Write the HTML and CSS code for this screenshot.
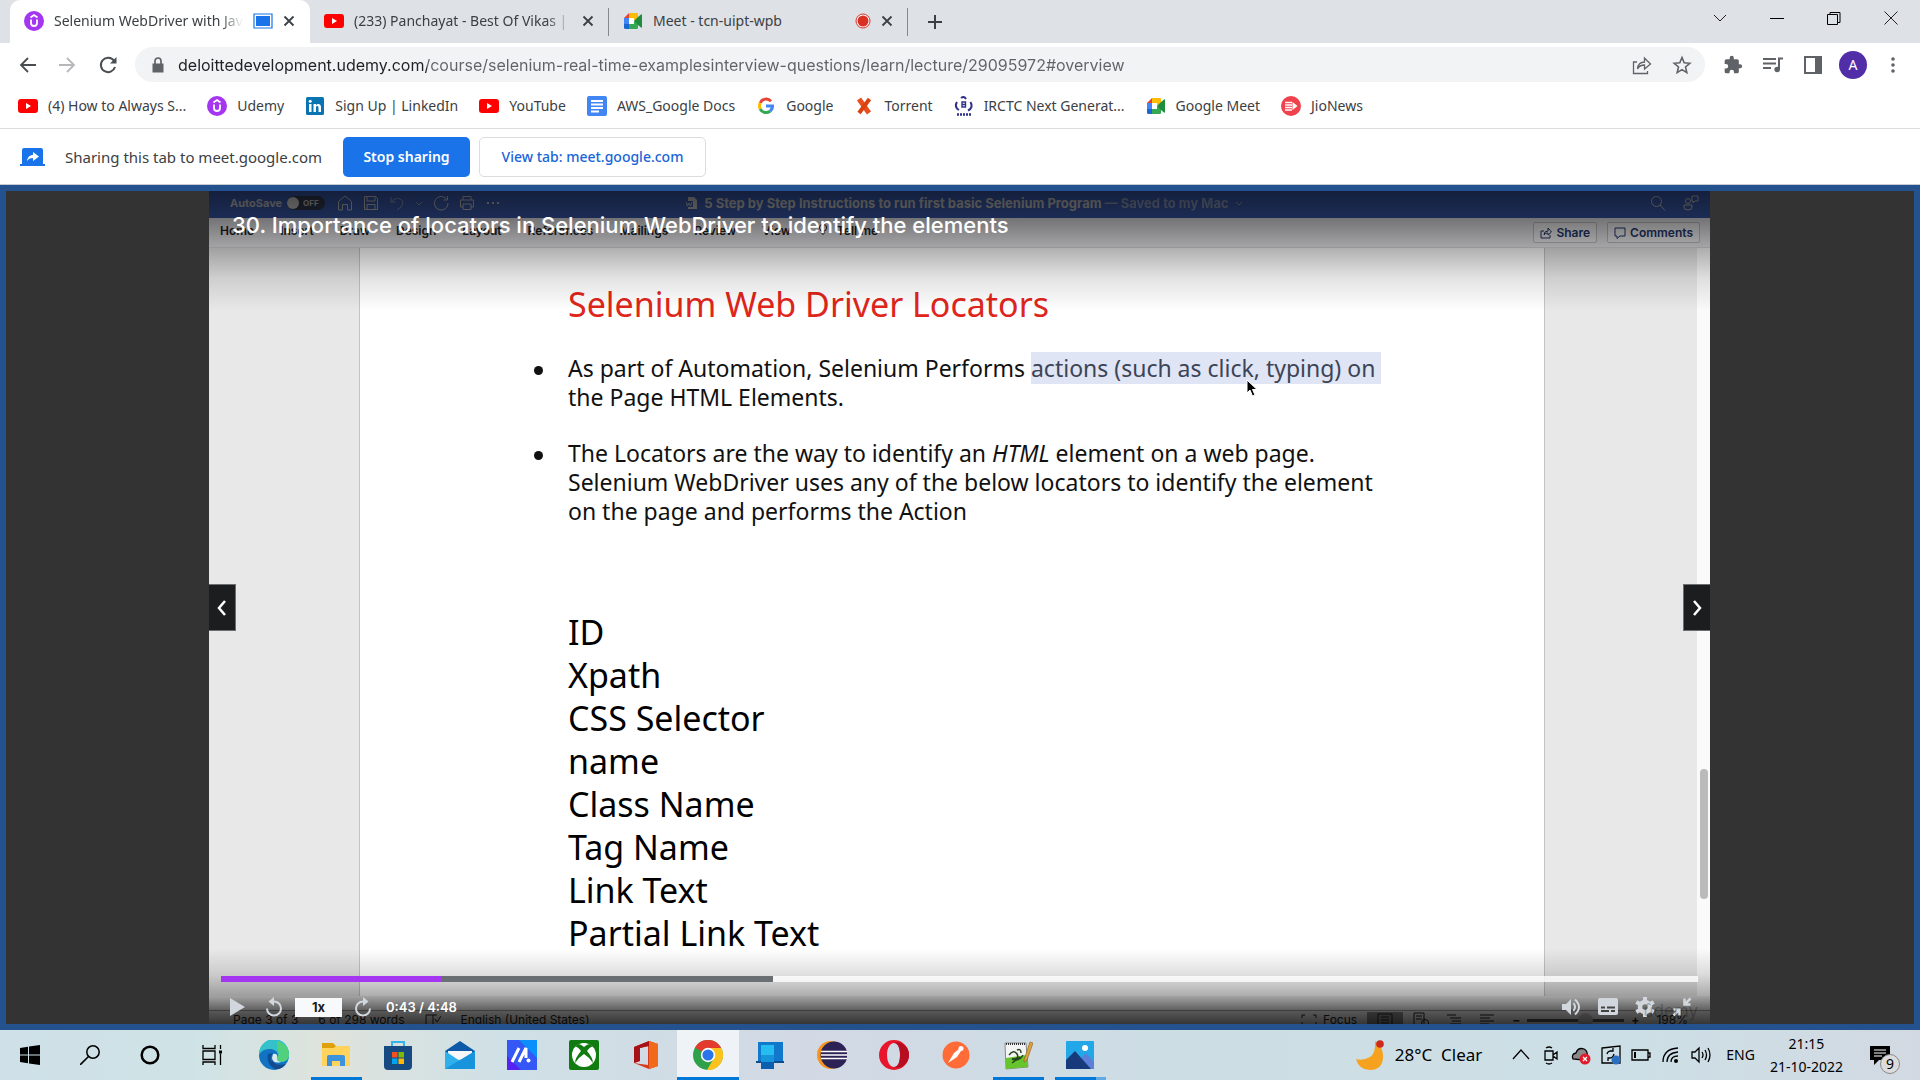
FILE: index.html
```html
<!DOCTYPE html>
<html lang="en">
<head>
<meta charset="utf-8">
<title>Selenium WebDriver with Java</title>
<link rel="stylesheet" href="styles.css">
</head>
<body>
<svg class="defs" width="0" height="0" aria-hidden="true">
  <symbol id="youtube" viewBox="0 0 20 20"><rect y="3" width="20" height="14" rx="3" fill="#f00"/><path d="M8 7v6l5-3z" fill="#fff"/></symbol>
  <symbol id="udemy" viewBox="0 0 20 20"><circle cx="10" cy="10" r="10" fill="#a435f0"/><path d="M6.500 6.500 10 4l3.500 2.500M7 8.500V12a3 3 0 0 0 6 0V8.500" fill="none" stroke="#fff" stroke-width="1.800"/></symbol>
  <symbol id="meet" viewBox="0 0 20 20"><path d="M1 7 6 2v5z" fill="#ea4335"/><path d="M6 2h8a1 1 0 0 1 1 1v4l-4 3V7H6z" fill="#fbbc04"/><path d="M1 7h5v6H1z" fill="#4285f4"/><path d="M1 13h5v5H2.500A1.500 1.500 0 0 1 1 16.500z" fill="#1967d2"/><path d="M6 13h5v-3l4 3v4a1 1 0 0 1-1 1H6z" fill="#34a853"/><path d="M6 7h5v6H6z" fill="#fff"/><path d="m11 10 4-4 3-2.500q1-.5 1 .5v12q0 1-1 .5L15 14z" fill="#1e8e3e"/></symbol>
  <symbol id="x" viewBox="0 0 12 12"><path d="m1.500 1.500 9 9m0-9-9 9" stroke="#3c4043" stroke-width="1.800" fill="none"/></symbol>
</svg>

<header class="browser">
  <div class="tabstrip">
    <div class="tab tab-active">
      <svg class="i20"><use href="#udemy"/></svg>
      <span class="tab-title">Selenium WebDriver with Java</span>
      <svg class="i20" viewBox="0 0 20 20"><path d="M1 3h18v14H1z" fill="#fff" stroke="#1a73e8" stroke-width="1.200"/><path d="M3 5h14v10H3z" fill="#1a73e8"/></svg>
      <button class="bare tab-close" aria-label="Close tab"><svg class="i12"><use href="#x"/></svg></button>
    </div>
    <div class="tab">
      <svg class="i20"><use href="#youtube"/></svg>
      <span class="tab-title">(233) Panchayat - Best Of Vikas | TVF</span>
      <button class="bare tab-close" aria-label="Close tab"><svg class="i12"><use href="#x"/></svg></button>
    </div>
    <div class="tab tab-line">
      <svg class="i20"><use href="#meet"/></svg>
      <span class="tab-title">Meet - tcn-uipt-wpb</span>
      <svg class="i16" viewBox="0 0 16 16"><circle cx="8" cy="8" r="7" fill="#fff" stroke="#d93025"/><circle cx="8" cy="8" r="5.500" fill="#d93025"/></svg>
      <button class="bare tab-close" aria-label="Close tab"><svg class="i12"><use href="#x"/></svg></button>
    </div>
    <button class="bare tab-new" aria-label="New tab"><svg class="i16" viewBox="0 0 16 16"><path d="M8 1v14M1 8h14" stroke="#3c4043" stroke-width="2"/></svg></button>
    <div class="window-buttons">
      <button class="bare" aria-label="Search tabs"><svg class="i16" viewBox="0 0 16 16"><path d="m2 5 6 6 6-6" fill="none" stroke="#222"/></svg></button>
      <button class="bare" aria-label="Minimize"><svg class="i16" viewBox="0 0 16 16"><path d="M1 8.500h14" stroke="#000"/></svg></button>
      <button class="bare" aria-label="Restore"><svg class="i16" viewBox="0 0 16 16"><path d="M1.500 4.500h10v10h-10zM4 4V2.500h10v10h-2" fill="none" stroke="#000"/></svg></button>
      <button class="bare" aria-label="Close"><svg class="i16" viewBox="0 0 16 16"><path d="m1.500 1.500 13 13m0-13-13 13" stroke="#222" fill="none"/></svg></button>
    </div>
  </div>

  <div class="toolbar">
    <div class="nav">
      <button class="bare" aria-label="Back"><svg class="i20" viewBox="0 0 20 20"><path d="M18 10H3m7-7-7 7 7 7" fill="none" stroke="#4a4d51" stroke-width="1.800"/></svg></button>
      <button class="bare" aria-label="Forward"><svg class="i20" viewBox="0 0 20 20"><path d="M1 10h15M9 3l7 7-7 7" fill="none" stroke="#b5b7ba" stroke-width="1.800"/></svg></button>
      <button class="bare" aria-label="Reload"><svg class="i20" viewBox="0 0 20 20"><path d="M16 5.800A7.200 7.200 0 1 0 17 12" fill="none" stroke="#4a4d51" stroke-width="2"/><path d="M18.500 2v6.500H12z" fill="#4a4d51"/></svg></button>
    </div>
    <div class="omnibox">
      <svg class="i16" viewBox="0 0 16 16"><path d="M2.500 6.500h11v9h-11z" fill="#5f6368"/><path d="M5 7V4a3 3 0 0 1 6 0v3" fill="none" stroke="#5f6368" stroke-width="1.700"/></svg>
      <input class="url" type="text" aria-label="Address" value="deloittedevelopment.udemy.com/course/selenium-real-time-examplesinterview-questions/learn/lecture/29095972#overview">
      <button class="bare" aria-label="Share this page"><svg class="i20" viewBox="0 0 20 20"><path d="M5 7H1.500v11.500h14V16M5.500 14c.5-5 3-7 7-7V3l6 6-6 5v-4c-3.500 0-5.500 1-7 4z" fill="none" stroke="#5f6368" stroke-width="1.300"/></svg></button>
      <button class="bare" aria-label="Bookmark this tab"><svg class="i20" viewBox="0 0 20 20"><path d="m10 2.500 2.200 5.300 5.600.5-4.300 3.700 1.300 5.600L10 14.600l-4.800 3 1.300-5.600-4.300-3.700 5.600-.5z" fill="none" stroke="#5f6368" stroke-width="1.600"/></svg></button>
    </div>
    <div class="actions">
      <button class="bare" aria-label="Extensions"><svg class="i20" viewBox="0 0 24 24"><path d="M20.500 11H19V7a2 2 0 0 0-2-2h-4V3.500a2.500 2.500 0 0 0-5 0V5H4a2 2 0 0 0-2 2v3.800h1.500a2.700 2.700 0 0 1 0 5.400H2V20a2 2 0 0 0 2 2h3.800v-1.500a2.700 2.700 0 0 1 5.400 0V22H17a2 2 0 0 0 2-2v-4h1.500a2.500 2.500 0 0 0 0-5z" fill="#5f6368"/></svg></button>
      <button class="bare" aria-label="Media"><svg class="i20" viewBox="0 0 20 20"><path d="M0 4h13M0 8.500h13M0 13h8M20 3.500h-4V14" fill="none" stroke="#5f6368" stroke-width="2"/><circle cx="14.200" cy="14.500" r="2.800" fill="#5f6368"/></svg></button>
      <button class="bare" aria-label="Side panel"><svg class="i20" viewBox="0 0 20 20"><path d="M2 2h16v16H2z" fill="none" stroke="#5f6368" stroke-width="2"/><path d="M12 2h6v16h-6z" fill="#5f6368"/></svg></button>
      <button class="bare avatar" aria-label="Profile">A</button>
      <button class="bare" aria-label="Menu"><svg class="i20" viewBox="0 0 20 20" fill="#5f6368"><circle cx="10" cy="4" r="1.800"/><circle cx="10" cy="10" r="1.800"/><circle cx="10" cy="16" r="1.800"/></svg></button>
    </div>
  </div>

  <nav class="bookmarks">
    <a href="#"><svg class="i20"><use href="#youtube"/></svg>(4) How to Always S...</a>
    <a href="#"><svg class="i20"><use href="#udemy"/></svg>Udemy</a>
    <a href="#"><svg class="i20" viewBox="0 0 20 20"><rect x="1" y="1" width="18" height="18" rx="1.500" fill="#0a74b3"/><path d="M4 8h2.500v8H4zM8.500 8H11v1.200C12.500 7 16 7.500 16 11v5h-2.500v-4.500c0-2-2.500-2-2.500 0V16H8.500z" fill="#fff"/><circle cx="5.200" cy="5.300" r="1.500" fill="#fff"/></svg>Sign Up | LinkedIn</a>
    <a href="#"><svg class="i20"><use href="#youtube"/></svg>YouTube</a>
    <a href="#"><svg class="i20" viewBox="0 0 20 20"><rect width="20" height="20" rx="2" fill="#4285f4"/><path d="M4 5h12M4 8.500h12M4 12h12M4 15.500h8" stroke="#fff" stroke-width="2"/></svg>AWS_Google Docs</a>
    <a href="#"><svg class="i20" viewBox="0 0 20 20" fill="none" stroke-width="3"><path d="M15 5.200A6.500 6.500 0 0 0 4.200 7" stroke="#ea4335"/><path d="M4.200 7a6.500 6.500 0 0 0 0 6" stroke="#fbbc05"/><path d="M4.200 13A6.500 6.500 0 0 0 14 15.200" stroke="#34a853"/><path d="M14 15.200A6.500 6.500 0 0 0 16.500 10H10" stroke="#4285f4"/></svg>Google</a>
    <a href="#"><svg class="i20" viewBox="0 0 20 20"><path d="m5 3 10 14" stroke="#e8501f" stroke-width="5"/><path d="M15.500 3 5 17" stroke="#d8430f" stroke-width="4"/></svg>Torrent</a>
    <a href="#"><svg class="i20" viewBox="0 0 20 20" fill="none" stroke="#2f3288"><path d="M7 2q3-2.500 5 1M3 6q-3 5 2 8M16.500 6q3 6-2.500 8.500" stroke-width="2"/><path d="M8 6h3.500v5H8zM8 8.500h3.500" stroke-width="1.400"/><path d="M3 18.500h14" stroke-width="2.500" stroke-dasharray="2 1"/></svg>IRCTC Next Generat...</a>
    <a href="#"><svg class="i20"><use href="#meet"/></svg>Google Meet</a>
    <a href="#"><svg class="i20" viewBox="0 0 20 20"><circle cx="10" cy="10" r="10" fill="#f0424c"/><path d="M4 6.500h7M4 9h7M4 11.500h7M4 14h7" stroke="#fff" stroke-width="1.400"/><path d="M11.500 6v8l5-4z" fill="#fff"/></svg>JioNews</a>
  </nav>

  <div class="sharebar">
    <svg class="share-icon" viewBox="0 0 25 18"><path d="M2 2a2 2 0 0 1 2-2h17a2 2 0 0 1 2 2v14h2v2H0v-2h2z" fill="#1a73e8"/><path d="M7 13c.5-4 3-6 6-6V4l6 4.500-6 4.500v-3c-3 0-4.500 1-6 3z" fill="#fff"/></svg>
    <span>Sharing this tab to meet.google.com</span>
    <div class="share-buttons">
      <button class="stop">Stop sharing</button>
      <button class="view">View tab: meet.google.com</button>
    </div>
  </div>
</header>

<main class="stage">
  <section class="player">
    <div class="word">
      <div class="word-title">
        <div class="word-tools">
          <b>AutoSave</b>
          <span class="toggle"><i></i>OFF</span>
          <svg class="i16" viewBox="0 0 16 16"><path d="M1.500 6.500 8 1l6.500 5.500V15h-4V9.500h-5V15h-4z"/></svg>
          <svg class="i16" viewBox="0 0 16 16"><path d="M1.500 1.500h11l2 2v11h-13zM4 1.500V6h8V1.500M4 14.500V9.500h8v5"/></svg>
          <svg class="i16 dim" viewBox="0 0 16 16"><path d="M2 2v5h5M2 7q4-5 9-3t1 8l-4 3"/></svg>
          <svg class="i8 dim" viewBox="0 0 8 8"><path d="m1 3 3 3 3-3"/></svg>
          <svg class="i16" viewBox="0 0 16 16"><path d="M13.500 4A6.800 6.800 0 1 0 15 8M14.500 1v4h-4"/></svg>
          <svg class="i16" viewBox="0 0 16 16"><path d="M4 5V1.500h8V5M4 12H1.500V5h13v7H12M4 9h8v5.500H4z"/></svg>
          <svg class="i16" viewBox="0 0 16 16"><path class="solid" d="M2 7h2v2H2zm5 0h2v2H7zm5 0h2v2h-2z"/></svg>
        </div>
        <div class="word-name"><svg class="i12" viewBox="0 0 12 12"><path class="solid" d="M2 0h6l3 3v9H2v-2h5V4H2z"/><path d="m0 5 1.500 4L3 6l1.500 3L6 5"/></svg><b>5 Step by Step Instructions to run first basic Selenium Program <span class="dim">— Saved to my Mac</span></b><svg class="i8 dim" viewBox="0 0 8 8"><path d="m1 3 3 3 3-3"/></svg></div>
        <div class="word-right">
          <svg class="i16" viewBox="0 0 16 16"><circle cx="6.500" cy="6.500" r="5"/><path d="m10 10 5 5.500"/></svg>
          <svg class="i16" viewBox="0 0 16 16"><circle cx="5" cy="6" r="2.500"/><path d="M1 10h8v2q0 3-4 3t-4-3zM9 1h6v5h-3l-2 2V6H9z"/></svg>
        </div>
      </div>
      <div class="ribbon">
        <div class="ribbon-tabs"><span>Home</span><span>Insert</span><span>Draw</span><span>Design</span><span>Layout</span><span>References</span><span>Mailings</span><span>Review</span><span>View</span><span class="tell"><svg class="i12" viewBox="0 0 12 12"><path d="M4 8Q1 5 3 2.500q3-3 6 0Q11 5 8 8zM4 10h4M5 12h2"/></svg>Tell me</span></div>
        <div class="ribbon-buttons">
          <button><svg class="i12" viewBox="0 0 12 12"><path d="M4 4H1v7h9V8M4 8q0-4 4-4V1l3.500 4L8 8V6Q5 6 4 8z"/></svg>Share</button>
          <button><svg class="i12" viewBox="0 0 12 12"><path d="M1 1h10v8H6l-3 2.500V9H1z"/></svg>Comments</button>
        </div>
      </div>
      <div class="workspace">
        <article class="page">
          <h1>Selenium Web Driver Locators</h1>
          <ul class="points">
            <li>As part of Automation, Selenium Performs <mark>actions (such as click, typing) on&nbsp;</mark><wbr>the Page HTML Elements.</li>
            <li>The Locators are the way to identify an <em>HTML</em> element on a web page. Selenium WebDriver uses any of the below locators to identify the element on the page and performs the Action</li>
          </ul>
          <ul class="locators">
            <li>ID</li><li>Xpath</li><li>CSS Selector</li><li>name</li><li>Class Name</li><li>Tag Name</li><li>Link Text</li><li>Partial Link Text</li>
          </ul>
          <svg class="pointer" viewBox="0 0 12 18"><path d="M1 1v13l3-3 2.500 6 2.500-1-2.500-5.500H11z" fill="#000" stroke="#fff"/></svg>
        </article>
        <div class="scroll-track"><div class="scroll-thumb"></div></div>
      </div>
      <div class="under-page"></div>
      <div class="status">
        <div class="status-left"><span>Page 3 of 3</span><span>6 of 298 words</span><svg class="i16" viewBox="0 0 16 16"><path d="M8 3v11M8 3H1v10h6l1 1 1-1h5M8 3h4m-2 4 2 3 4-6"/></svg><span>English (United States)</span></div>
        <div class="status-right">
          <span class="focus"><svg class="i16" viewBox="0 0 16 16"><path d="M4 3H1v3m11-3h3v3M1 10v3h3m11-3v3h-3"/></svg>Focus</span>
          <span class="layout-on"><svg class="i16" viewBox="0 0 16 16"><path d="M1 2h14v12H1zM4 5h8M4 8h8M4 11h8"/></svg></span>
          <svg class="i16" viewBox="0 0 16 16"><path d="M1 1h10v12H1zM3 4h6M3 7h6"/><circle cx="12" cy="11" r="3.500"/></svg>
          <svg class="i16" viewBox="0 0 16 16"><path d="M1 3h9M4 6h11M6 9h9M4 12h11"/></svg>
          <svg class="i16" viewBox="0 0 16 16"><path d="M1 3h14M1 6h10M1 9h14M1 12h9"/></svg>
          <span class="zoom-slider"><b>−</b><i class="rail"><i class="knob"></i></i><b>+</b></span>
          <span>198%</span>
        </div>
      </div>
    </div>

    <div class="overlay">
      <h2>30. Importance of locators in Selenium WebDriver to identify the elements</h2>
      <div class="side-buttons">
        <button class="prev" aria-label="Previous lecture"><svg class="i16" viewBox="0 0 16 16"><path d="m11 1-6 7 6 7"/></svg></button>
        <button class="next" aria-label="Next lecture"><svg class="i16" viewBox="0 0 16 16"><path d="m5 1 6 7-6 7"/></svg></button>
      </div>
      <div class="controls">
        <input class="seek" type="range" min="0" max="288" value="43" aria-label="Seek">
        <div class="control-row">
          <button class="bare" aria-label="Play"><svg class="i20" viewBox="0 0 20 20"><path d="M3 1v18l15-9z" fill="#d1d7dc"/></svg></button>
          <button class="bare" aria-label="Back 5 seconds"><svg class="i20" viewBox="0 0 20 20"><path d="M10 4.500a7 7 0 1 1-7 7" fill="none" stroke="#d1d7dc" stroke-width="2"/><path d="M10 0v9L4.500 4.500z" fill="#d1d7dc"/></svg></button>
          <button class="rate">1x</button>
          <button class="bare" aria-label="Forward 5 seconds"><svg class="i20" viewBox="0 0 20 20"><path d="M10 4.500a7 7 0 1 0 7 7" fill="none" stroke="#d1d7dc" stroke-width="2"/><path d="M10 0v9l5.500-4.500z" fill="#d1d7dc"/></svg></button>
          <span class="time">0:43 / 4:48</span>
          <div class="control-right">
            <span class="brand">ûdemy</span>
            <button class="bare" aria-label="Volume"><svg class="i20" viewBox="0 0 20 20"><path d="M1 7h4l5-5v16l-5-5H1z" fill="#d1d7dc"/><path d="M12.500 6q3 4 0 8M14 2.500q8 7.500 0 15" fill="none" stroke="#d1d7dc" stroke-width="2"/></svg></button>
            <button class="bare" aria-label="Captions"><svg class="i20" viewBox="0 0 20 20"><rect y="1" width="20" height="17" rx="2" fill="#d1d7dc"/><path d="M3 10.500h4m2 0h8M3 14h8m2 0h4" stroke="#444" stroke-width="2"/></svg></button>
            <button class="bare" aria-label="Settings"><svg class="i20" viewBox="0 0 20 20"><circle cx="10" cy="10" r="5" fill="none" stroke="#d1d7dc" stroke-width="4.500"/><path d="M10 0v4m0 12v4M1.300 5l3.500 2m10.400 6 3.500 2m0-10-3.500 2M4.800 13l-3.500 2" stroke="#d1d7dc" stroke-width="4"/></svg></button>
            <button class="bare" aria-label="Exit full screen"><svg class="i20" viewBox="0 0 20 20"><path d="m18.500 1.500-6 6m0-6v6h6m-17 11 6-6m0 6v-6h-6" fill="none" stroke="#d1d7dc" stroke-width="2.500"/></svg></button>
          </div>
        </div>
      </div>
    </div>
  </section>
</main>

<footer class="taskbar">
  <div class="apps">
    <button class="app sys" aria-label="Start"><svg class="i20" viewBox="0 0 20 20"><path d="m0 3 8-1.200v7.700H0zM9 1.600 20 0v9.500H9zM0 10.500h8v7.700L0 17zM9 10.500h11V20L9 18.400z"/></svg></button>
    <button class="app sys" aria-label="Search"><svg class="i20" viewBox="0 0 20 20"><circle cx="13" cy="7" r="6.200" fill="none" stroke="#000" stroke-width="1.500"/><path d="M8.500 11.500 0 20" stroke="#000" stroke-width="1.600"/></svg></button>
    <button class="app sys" aria-label="Cortana"><svg class="i20" viewBox="0 0 20 20"><circle cx="10" cy="10" r="8.300" fill="none" stroke="#000" stroke-width="2.500"/></svg></button>
    <button class="app sys" aria-label="Task view"><svg class="i20" viewBox="0 0 20 20"><path d="M1 0v3.500h12V0M1 6h12v8.500H1zM1 20v-3h12v3M18.500 0v4M18.500 8.500V20" fill="none" stroke="#000" stroke-width="1.300"/><path d="M17 5.500h3v3h-3z"/></svg></button>
    <button class="app" aria-label="Edge"><svg class="i30" viewBox="0 0 30 30"><circle cx="15" cy="15" r="15" fill="#1273c4"/><path d="M0 13A15 15 0 0 1 30 15c0 5-4 7-8 7s-5-2-4-4c3-5-2-9-7-9C6 9 2 11 0 15z" fill="#35c1c9"/><path d="M18 1q12 3 12 14c0 4-4 7-8 7s-5-2-4-4q3-4 1-7z" fill="#52d17c"/><path d="M9 14c-2 8 3 15 10 15l5-2q-10 2-12-6-1-4 2-8z" fill="#0c4f94"/><path d="M13 19q2 8 14 5-5 6-11 5-6-4-3-10z" fill="#154b8e"/><path d="M14 14q5-1 4 4-1 3 4 4-8 2-9-4z" fill="#dce9ee"/></svg></button>
    <button class="app open" aria-label="File Explorer"><svg class="i30" viewBox="0 0 30 30"><path d="M1 3h11l3 3h13v4H1z" fill="#e0a00b"/><path d="M1 8h12l2-2h14v20H1z" fill="#ffd35c"/><path d="M6 26V17q0-2 2-2h14q2 0 2 2v9h-5v-5h-8v5z" fill="#3a93dc"/></svg></button>
    <button class="app" aria-label="Store"><svg class="i30" viewBox="0 0 30 30"><path d="M9 7V2h12v5" fill="none" stroke="#35b4ec" stroke-width="2"/><path d="M1 6h28v20q0 4-4 4H5q-4 0-4-4z" fill="#164a80"/><path d="M9 12h5.500v5.500H9z" fill="#f25022"/><path d="M15.500 12H21v5.500h-5.500z" fill="#7fba00"/><path d="M9 18.500h5.500V24H9z" fill="#00a4ef"/><path d="M15.500 18.500H21V24h-5.500z" fill="#ffb900"/></svg></button>
    <button class="app" aria-label="Mail"><svg class="i30" viewBox="0 0 30 30"><path d="M0 11 15 1l15 10v5H0z" fill="#0d59a8"/><path d="M3 11h24v8H3z" fill="#f5f7fa"/><path d="m0 11 15 10 15-10v18H0z" fill="#2eb0ec"/><path d="M0 29 30 11v18z" fill="#1893dc"/></svg></button>
    <button class="app" aria-label="MyASUS"><svg class="i30" viewBox="0 0 30 30"><path d="M0 0h30v30H0z" fill="#3457f5"/><path d="M0 30V16l14 14z" fill="#5722f0"/><path d="M12 0h18v18z" fill="#0b8ff8"/><path d="m5 22 7-14M12 22l7-14v10" stroke="#fff" stroke-width="3" fill="none"/><circle cx="21.500" cy="20.500" r="2" fill="#fff"/></svg></button>
    <button class="app" aria-label="Xbox"><svg class="i30" viewBox="0 0 30 30"><rect width="30" height="30" rx="2" fill="#107c10"/><circle cx="15" cy="15" r="12" fill="#fff"/><path d="M9 4q3 0 6 3 3-3 6-3l3 3q-2-1-6 4 6 7 6 12-4-6-9-9-5 3-9 9 0-5 6-12-4-5-6-4z" fill="#107c10"/></svg></button>
    <button class="app" aria-label="Office"><svg class="i30" viewBox="0 0 30 30"><path d="M3 7 18 1l9 3v22l-9 3-15-6 14 2V6L9 8v13l-6 2z" fill="#d73b1a"/><path d="m18 1 9 3v22l-9 3z" fill="#f06a19"/><path d="M3 7 18 1v5L9 8v13l-6 2z" fill="#a61218"/></svg></button>
    <button class="app open current" aria-label="Chrome"><svg class="i30" viewBox="0 0 30 30"><circle cx="15" cy="15" r="15" fill="#2ea14a"/><path d="M15 15 2 7.500A15 15 0 0 1 28 7.500z" fill="#e33b2e"/><path d="M15 8h13.300A15 15 0 0 1 14 30l7-12z" fill="#fcc31e"/><circle cx="15" cy="15" r="7.200" fill="#fff"/><circle cx="15" cy="15" r="5.600" fill="#2b74ec"/></svg></button>
    <button class="app" aria-label="Your Phone"><svg class="i30" viewBox="0 0 30 30"><path d="M3 2h25v19H3z" fill="#1278cc"/><path d="M1 21h28v2H1z" fill="#0b4f91"/><path d="M6 5h13v24H6z" fill="#27bdf0"/><path d="M6 15h13v7H6z" fill="#1795dc"/><path d="M6 22h13v7H6z" fill="#0c5fae"/></svg></button>
    <button class="app" aria-label="Eclipse"><svg class="i30" viewBox="0 0 30 30"><circle cx="14" cy="15" r="14" fill="#f7941e"/><circle cx="17" cy="15" r="13.500" fill="#2c2255"/><path d="M4 11.500h26M4 15h26M4 18.500h26" stroke="#fff" stroke-width="1.600"/></svg></button>
    <button class="app" aria-label="Opera"><svg class="i30" viewBox="0 0 30 30"><path d="M15 0a15 15 0 1 0 0 30 15 15 0 1 0 0-30m0 3c4 0 6 5 6 12s-2 12-6 12-7-5-7-12S11 3 15 3" fill="#e8162d" fill-rule="evenodd"/><path d="M15 3c4 0 6 5 6 12s-2 12-6 12q5 2 9-1 6-4 6-11T24 4q-4-3-9-1" fill="#b80d20"/></svg></button>
    <button class="app" aria-label="Postman"><svg class="i30" viewBox="0 0 30 30"><circle cx="15" cy="15" r="13.500" fill="#ff6c37"/><path d="m7 23 6-10 5-4 2 2-4 6z" fill="#fff"/><circle cx="20" cy="8.500" r="2.500" fill="#fff"/></svg></button>
    <button class="app open" aria-label="Notepad++"><svg class="i30" viewBox="0 0 30 30"><path d="M2 3h21l2 24-22 2z" fill="#f4f4f4" stroke="#888"/><path d="m3 18 21-3 1 12-22 2z" fill="#66c52d"/><path d="M3 4h20" stroke="#333" stroke-width="2" stroke-dasharray="1 1"/><path d="M6 15q5-6 8-1t-5 5q7 3 11-4M9 23l8-6M14 10q4-2 4 3" fill="none" stroke="#26451c" stroke-width="1.500"/><path d="m21 20 6-18 3 1-6 17-3 2z" fill="#e0a33c" stroke="#8a5a1e" stroke-width=".6"/></svg></button>
    <button class="app open photos" aria-label="Photos"><svg class="i30" viewBox="0 0 30 30"><rect x="1" y="1" width="28" height="28" rx="1" fill="#22a7e8"/><path d="m15 20 6-7 8 9v7H15z" fill="#5d7fd8"/><path d="m1 20 9-9 16 18H1z" fill="#173a7a"/><circle cx="20" cy="8" r="3" fill="#fff"/></svg></button>
  </div>
  <div class="tray">
    <span class="weather"><svg class="i30" viewBox="0 0 30 30"><path d="M20 1q1 12-5 16-7 4-14 2 3 11 14 11 12 0 13-12 1-10-8-17z" fill="#f6a21f"/><circle cx="25" cy="4" r="3.800" fill="#cc2a1c"/></svg>28°C&nbsp; Clear</span>
    <span class="tray-icons">
      <svg class="i20" viewBox="0 0 20 20"><path d="m2 14 8-9 8 9"/></svg>
      <svg class="i20" viewBox="0 0 20 20"><path d="M4 6h8v9H4zM12 10l4-3v7l-4-3M5 3q3-2 6 0M5 18q3 2 6 0"/></svg>
      <svg class="i20" viewBox="0 0 20 20"><path d="M2 14q-2-5 3-6 2-6 8-4 4 2 3 7l-4 4z" fill="#8a8a8a"/><circle cx="14" cy="14" r="5.500" fill="#e01b2b" stroke="none"/><path d="m12 12 4 4m0-4-4 4" stroke="#fff"/></svg>
      <svg class="i20" viewBox="0 0 20 20"><path d="m1 3 18-2v17H1zM6 9q1-4 6-3m-5 7q5 1 6-4M12 3v3H9M7 16v-3h3"/><circle cx="15" cy="15" r="4.500" fill="#2a6fc0" stroke="none"/></svg>
      <svg class="i20" viewBox="0 0 20 20"><path d="M1 5h16v10H1zM17 8h2v4h-2"/><path d="M3 7h2v6H3z" fill="#000" stroke="none"/></svg>
      <svg class="i20" viewBox="0 0 20 20"><path d="M2 17Q2 4 17 3M6 17q0-9 11-10M10 17q0-6 7-6"/><circle cx="15" cy="16" r="2" fill="#000" stroke="none"/></svg>
      <svg class="i20" viewBox="0 0 20 20"><path d="M1 7h3l4-4v14l-4-4H1zM11 7q2 3 0 6M14 5q3 5 0 10M17 3q4 7 0 14"/></svg>
    </span>
    <span>ENG</span>
    <span class="clock"><time>21:15</time><time>21-10-2022</time></span>
    <span class="notice"><svg class="i20" viewBox="0 0 20 20"><path d="M0 1h20v14H9l-5 5v-5H0z"/><path d="M4 5h12M4 8h12M4 11h8" stroke="#fff"/></svg><span class="badge">9</span></span>
  </div>
</footer>
</body>
</html>
```
FILE: styles.css
```css
* { box-sizing: border-box; }
body { margin: 0; min-height: 100vh; display: flex; flex-direction: column; background: #fff; color: #3c4043; font: 14px/20px "Noto Sans", "Open Sans", sans-serif; }
button, input { font: inherit; }
h1, h2, ul { margin: 0; padding: 0; font-weight: 400; }
ul { list-style: none; }
svg { flex: none; display: block; }
.defs { position: absolute; }
.i8 { width: 8px; height: 8px; }
.i12 { width: 12px; height: 12px; }
.i16 { width: 16px; height: 16px; }
.i20 { width: 20px; height: 20px; }
.i30 { width: 30px; height: 30px; }
.bare { padding: 0; border: 0; background: none; }

/* Tabs */
.tabstrip { display: flex; height: 43px; padding-left: 10px; background: #dee1e6; }
.tab { display: flex; align-items: center; width: 299px; padding: 0 14px 2px; gap: 10px; border-right: 1px solid transparent; }
.tab-active { width: 300px; background: #fff; border-radius: 10px 10px 0 0; }
.tab:not(.tab-active) { border-image: linear-gradient(transparent 20%, #85888d 20%, #85888d 82%, transparent 82%) 1; }
.tab-title { flex: 1; overflow: hidden; white-space: nowrap; mask-image: linear-gradient(90deg, #000 88%, transparent); }
.tab-line .tab-title { mask-image: none; }
.tab-new { margin-left: 19px; }
.window-buttons { display: flex; gap: 41px; margin-left: auto; padding: 0 21px 7px 0; }

/* Toolbar */
.toolbar { display: flex; align-items: center; height: 45px; padding: 0 17px 2px 18px; }
.nav { display: flex; gap: 20px; margin-right: 17px; }
.omnibox { display: flex; flex: 1; align-items: center; height: 35px; gap: 20px; padding: 0 13px 0 15px; border-radius: 18px; background: #f1f3f4; }
.url { flex: 1; min-width: 0; margin-left: -8px; padding: 0; border: 0; outline: 0; font: 16px/24px Inter, sans-serif; color: transparent; background: linear-gradient(90deg, #202124 249px, #5f6368 249px); -webkit-background-clip: text; background-clip: text; }
.actions { display: flex; align-items: center; gap: 20px; margin-left: 18px; }
.actions .avatar { width: 28px; height: 28px; margin: 0 -4px; border-radius: 50%; background: #512da8; color: #fff; text-align: center; }

/* Bookmarks and sharing bar */
.bookmarks { display: flex; gap: 21px; height: 41px; padding: 0 18px 5px; align-items: center; border-bottom: 1px solid #dadce0; }
.bookmarks a { display: flex; align-items: center; gap: 10px; color: inherit; text-decoration: none; white-space: nowrap; }
.sharebar { display: flex; align-items: center; gap: 20px; height: 56px; padding-left: 20px; border-bottom: 1px solid #c8ccd2; font-size: 15px; }
.share-icon { width: 25px; height: 18px; }
.share-buttons { display: flex; gap: 9px; margin-left: 1px; }
.share-buttons button { height: 40px; border-radius: 5px; font-size: 14px; font-weight: 500; }
.stop { width: 127px; border: 0; background: #1a73e8; color: #fff; }
.share-buttons .stop { font-weight: 600; }
.view { width: 227px; border: 1px solid #dadce0; background: #fff; color: #1a65d8; }

/* Player */
.stage { display: flex; flex: 1; border: 6px solid #23528f; padding: 0 204px 0 203px; background: #333; }
.player { position: relative; display: flex; flex: 1; }
.word { display: flex; flex: 1; flex-direction: column; min-width: 0; font: 12px/16px Inter, sans-serif; }
.word svg { fill: none; stroke: currentColor; }
.word .solid { fill: currentColor; stroke: none; }
.dim { opacity: .6; }
.word-title { display: grid; grid-template-columns: 1fr auto 1fr; align-items: center; height: 27px; padding: 0 11px 4px 21px; background: #3a5bb0; color: #c6c6c6; }
.word-tools { display: flex; align-items: center; gap: 10px; font-size: 11px; }
.toggle { display: flex; align-items: center; gap: 4px; width: 38px; height: 14px; margin: 0 2px 0 -5px; border-radius: 7px; background: #333b50; font-size: 8px; font-weight: 700; }
.toggle i { width: 12px; height: 12px; border-radius: 50%; background: #d8d8d8; }
.word-name { display: flex; align-items: center; gap: 6px; font-size: 13px; }
.word-right { display: flex; justify-content: flex-end; gap: 17px; }
.ribbon { display: flex; justify-content: space-between; height: 30px; padding: 4px 10px 4px 11px; background: #f0f0f4; border-bottom: 1px solid #dcdcdc; color: #222; font-weight: 600; }
.ribbon-tabs { display: flex; gap: 26px; padding-top: 1px; }
.tell { display: flex; gap: 8px; }
.ribbon-buttons { display: flex; gap: 10px; }
.ribbon-buttons button { display: flex; align-items: center; gap: 4px; padding: 0 6px; border: 1px solid #c4c4c8; border-radius: 2px; background: #f6f6f8; color: #27386f; }
.workspace { display: flex; flex: 1; padding-left: 150px; background: #e8e8e8; }
.page { position: relative; flex: 1; padding: 33px 20px 20px 174px; margin-right: 152px; border: solid #c4c4c4; border-width: 0 1px; background: #fff; color: #111; font-family: "Noto Sans", "Open Sans", sans-serif; }
.page h1 { padding-left: 34px; color: #e0251b; font-size: 34px; line-height: 46px; }
.points { display: grid; gap: 27px; max-width: 852px; margin-top: 27px; font-size: 23px; line-height: 29px; }
.points li { position: relative; padding-left: 34px; }
.points li::before { content: ""; position: absolute; left: 0; top: 12px; width: 9px; height: 9px; border-radius: 50%; background: #111; }
.points mark { background: #dfe5f4; color: #3c4456; }
.locators { margin-top: 85px; padding-left: 34px; font-size: 34px; line-height: 43px; color: #000; }
.pointer { position: absolute; left: 886px; top: 131px; width: 12px; height: 18px; }
.scroll-track { display: flex; justify-content: center; align-items: flex-end; width: 13px; padding-bottom: 97px; background: #fafafa; }
.scroll-thumb { width: 8px; height: 130px; border-radius: 4px; background: #bababa; }
.under-page { height: 14px; background: #f0f0f0; }
.status { display: flex; justify-content: space-between; height: 14px; padding: 1px 22px 0 24px; overflow: hidden; border-top: 1px solid #999; background: #e2e2e2; color: #222; }
.status-left, .status-right, .focus, .zoom-slider { display: flex; gap: 20px; align-items: center; height: 16px; white-space: nowrap; }
.status-right { gap: 17px; }
.status .focus { gap: 6px; }
.layout-on { display: flex; justify-content: center; width: 36px; height: 16px; margin: 0 -7px; background: #888; }
.status .zoom-slider { gap: 7px; }
.rail { display: flex; justify-content: center; align-items: center; width: 97px; height: 3px; background: #555; }
.knob { width: 15px; height: 15px; margin-left: 20px; border-radius: 50%; background: #bbb; }

/* Controls over the video */
.overlay { position: absolute; inset: 0; display: flex; flex-direction: column; justify-content: space-between; color: #fff; background: linear-gradient(rgba(0,0,0,.66) 0, rgba(0,0,0,.52) 27px, rgba(0,0,0,.31) 57px, rgba(0,0,0,.11) 87px, transparent 120px), linear-gradient(0deg, rgba(0,0,0,.76) 0, rgba(0,0,0,.6) 14px, rgba(0,0,0,.32) 28px, rgba(0,0,0,.12) 50px, transparent 75px); font-family: Inter, sans-serif; }
.overlay h2 { padding: 20px 23px 0; font-size: 22px; line-height: 28px; font-weight: 500; }
.side-buttons { position: absolute; inset: 0; display: flex; justify-content: space-between; align-items: center; }
.side-buttons button { display: grid; place-items: center; width: 27px; height: 47px; padding: 0; border: 1px solid #6a6f73; background: #1c1d1f; }
.side-buttons .prev { border-left: 0; }
.side-buttons .next { border-right: 0; }
.side-buttons svg { fill: none; stroke: #fff; stroke-width: 2.5px; }
.controls { position: relative; display: grid; gap: 15px; padding: 0 12px 7px; }
.seek { appearance: none; width: 100%; height: 6px; margin: 0; background: linear-gradient(90deg, #a435f0 14.9%, #6a6f73 14.9%, #6a6f73 37.4%, rgba(255,255,255,.8) 37.4%); }
.seek::-webkit-slider-thumb { appearance: none; width: 0; height: 0; }
.control-row { display: flex; align-items: center; gap: 11px; height: 20px; padding: 0 6px; }
.control-row > .bare:first-child { margin-right: 6px; }
.rate { width: 47px; height: 19px; padding: 0; border: 0; background: #f7f9fa; color: #1c1d1f; font-size: 13px; font-weight: 700; line-height: 19px; }
.time { font-size: 13px; font-weight: 600; }
.control-right { display: flex; gap: 17px; margin-left: auto; }
.control-row .time { margin-left: 2px; }
.brand { position: absolute; right: 12px; bottom: 3px; color: rgba(0,0,0,.25); font-size: 17px; }

/* Taskbar */
.taskbar { display: flex; justify-content: space-between; height: 50px; color: #000; background: linear-gradient(90deg, #cfe0e8 0, #cfe3e6 10%, #dfe3dc 17%, #cfe0e6 26%, #d2d9e4 42%, #cddde4 60%, #cddfe6 85%, #d2d9e2 100%); font-size: 14px; }
.apps { display: flex; }
.app { display: grid; place-items: center; width: 62px; padding: 0; border: 0; background: none; }
.sys { width: 60px; }
.sys:nth-child(4) { width: 63px; }
.open { background: linear-gradient(#0078d7, #0078d7) center bottom / 51px 3px no-repeat; }
.photos { background-image: linear-gradient(90deg, #0078d7 80%, #62aae4 80%); }
.current { background: linear-gradient(#0078d7, #0078d7) center bottom / 62px 3px no-repeat, rgba(255,255,255,.65); }
.tray { display: flex; align-items: center; gap: 15px; padding-right: 20px; }
.weather { display: flex; align-items: center; gap: 10px; margin-right: 14px; font-size: 17px; }
.tray-icons { display: flex; gap: 10px; }
.tray-icons svg { fill: none; stroke: #000; stroke-width: 1.3px; }
.clock { display: grid; line-height: 23px; text-align: center; }
.notice { position: relative; margin-left: 12px; padding-right: 10px; }
.badge { position: absolute; left: 10px; top: 9px; width: 20px; height: 20px; border: 1px solid #888; border-radius: 50%; background: #dcdcdc; line-height: 18px; text-align: center; }
```
